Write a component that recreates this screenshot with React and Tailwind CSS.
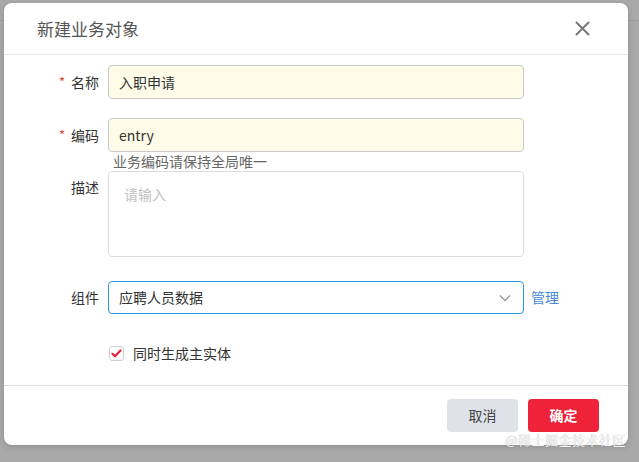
import React from 'react';

const font = { fontFamily: '"Noto Sans CJK SC", "Noto Sans", sans-serif' };

const Label = ({ required, children, top }) => (
  <div className={`w-[95px] flex justify-end text-[14px] text-[#333] ${top ? 'pt-[6px] self-start' : ''}`}>
    {required && <span className="text-[#e0452b] mr-[6px] text-[13px] leading-[20px]">*</span>}
    <span>{children}</span>
  </div>
);

const App = () => {
  return (
    <div className="relative w-[639px] h-[462px] bg-[#a9a9a9] overflow-hidden" style={font}>
      {/* page behind the overlay */}
      <div className="absolute left-0 right-0 top-[20px] h-px bg-[#9c9c9c]" />

      <div className="pt-[3px] pl-[4px]">
        <div className="relative w-[624px] h-[442px] bg-white rounded-[8px] flex flex-col shadow-[0_2px_6px_rgba(0,0,0,0.15)]">
          {/* header */}
          <div className="h-[52px] shrink-0 flex items-center justify-between pl-[33px] pr-[38px] border-b border-[#e6e6e6]">
            <span className="text-[17px] text-[#555]">新建业务对象</span>
            <svg width="15" height="15" viewBox="0 0 15 15" fill="none" stroke="#777" strokeWidth="2" strokeLinecap="round">
              <path d="M1.5 1.5 L13.5 13.5 M13.5 1.5 L1.5 13.5" />
            </svg>
          </div>

          {/* body */}
          <div className="flex-1 flex flex-col pt-[10px]">
            <div className="flex items-center">
              <Label required>名称</Label>
              <div className="ml-[9px] w-[416px] h-[34px] rounded-[4px] border border-[#c9c9c9] bg-[#fffbe9] flex items-center px-[10px] text-[14px] text-[#333]">
                入职申请
              </div>
            </div>

            <div className="flex items-center mt-[19px]">
              <Label required>编码</Label>
              <div className="ml-[9px] w-[416px] h-[34px] rounded-[4px] border border-[#c9c9c9] bg-[#fffbe9] flex items-center px-[10px] text-[14px] text-[#333]">
                entry
              </div>
            </div>
            <div className="ml-[109px] text-[14px] leading-[19px] text-[#666]">业务编码请保持全局唯一</div>

            <div className="flex">
              <Label top>描述</Label>
              <div className="ml-[9px] w-[416px] h-[86px] rounded-[4px] border border-[#dcdcdc] bg-white px-[15px] pt-[12px] text-[14px] text-[#c0c0c0]">
                请输入
              </div>
            </div>

            <div className="flex items-center mt-[24px]">
              <Label>组件</Label>
              <div className="ml-[9px] w-[416px] h-[33px] rounded-[4px] border border-[#2a9ae0] bg-white flex items-center justify-between pl-[10px] pr-[12px] text-[14px] text-[#333]">
                <span>应聘人员数据</span>
                <svg width="12" height="8" viewBox="0 0 12 8" fill="none" stroke="#999" strokeWidth="1.3">
                  <path d="M1 1.5 L6 6.5 L11 1.5" />
                </svg>
              </div>
              <span className="ml-[7px] text-[14px] text-[#4a88d6]">管理</span>
            </div>

            <div className="flex items-center mt-[29px] ml-[105px]">
              <div className="w-[15px] h-[15px] rounded-[3px] border border-[#cfcfcf] bg-white flex items-center justify-center">
                <svg width="11" height="9" viewBox="0 0 11 9" fill="none" stroke="#e8203a" strokeWidth="2.2" strokeLinecap="round" strokeLinejoin="round">
                  <path d="M1.5 4.8 L4 7.2 L9.5 1.5" />
                </svg>
              </div>
              <span className="ml-[9px] text-[14px] text-[#333]">同时生成主实体</span>
            </div>
          </div>

          {/* footer */}
          <div className="h-[60px] shrink-0 border-t border-[#dedede] flex items-start justify-end pt-[13px] pr-[29px] gap-[10px]">
            <button className="w-[71px] h-[33px] rounded-[4px] bg-[#dfe3e9] text-[14px] text-[#444]">取消</button>
            <button className="w-[71px] h-[33px] rounded-[4px] bg-[#ee2238] text-[14px] text-white font-bold">确定</button>
          </div>

          <div className="absolute right-[2px] bottom-[-4px] text-[13px] text-[#f4f4f4] tracking-[0.5px]" style={{ textShadow: '0 0 1px rgba(120,120,120,0.6)' }}>
            @稀土掘金技术社区
          </div>
        </div>
      </div>
    </div>
  );
};

export default App;
